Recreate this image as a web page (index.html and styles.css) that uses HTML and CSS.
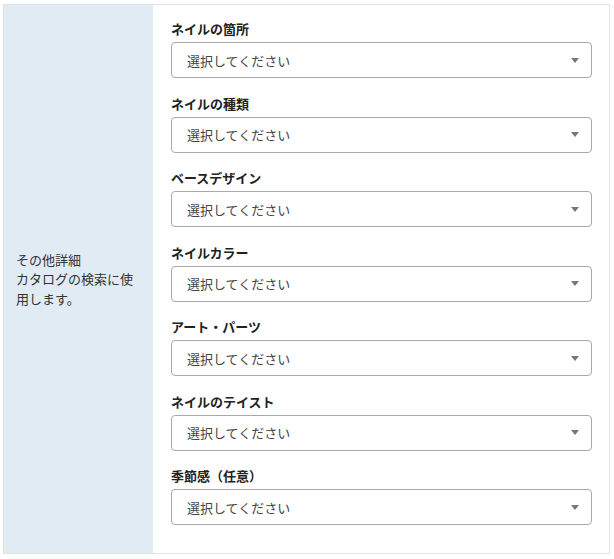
FILE: index.html
```html
<!DOCTYPE html>
<html lang="ja">
<head>
<meta charset="utf-8">
<link rel="stylesheet" href="styles.css">
</head>
<body>
<div class="row">
  <div class="head">
    <p>その他詳細<br>カタログの検索に使用します。</p>
  </div>
  <div class="fields">
    <div class="field">
      <div class="label">ネイルの箇所</div>
      <div class="select"><span>選択してください</span><i class="arrow"></i></div>
    </div>
    <div class="field">
      <div class="label">ネイルの種類</div>
      <div class="select"><span>選択してください</span><i class="arrow"></i></div>
    </div>
    <div class="field">
      <div class="label">ベースデザイン</div>
      <div class="select"><span>選択してください</span><i class="arrow"></i></div>
    </div>
    <div class="field">
      <div class="label">ネイルカラー</div>
      <div class="select"><span>選択してください</span><i class="arrow"></i></div>
    </div>
    <div class="field">
      <div class="label">アート・パーツ</div>
      <div class="select"><span>選択してください</span><i class="arrow"></i></div>
    </div>
    <div class="field">
      <div class="label">ネイルのテイスト</div>
      <div class="select"><span>選択してください</span><i class="arrow"></i></div>
    </div>
    <div class="field">
      <div class="label">季節感（任意）</div>
      <div class="select"><span>選択してください</span><i class="arrow"></i></div>
    </div>
  </div>
</div>
</body>
</html>
```

FILE: styles.css
```css
html, body {
  margin: 0;
  padding: 0;
  background: #fff;
}
body {
  padding: 4px 4px 0 3px;
  font-family: "Noto Sans CJK JP", "Noto Sans", sans-serif;
  color: #333;
}
.row {
  display: flex;
  width: 607px;
  height: 550px;
  box-sizing: border-box;
  border: 1px solid #e3e3e3;
}
.head {
  width: 149px;
  flex: none;
  background: #e1ebf4;
  display: flex;
  align-items: center;
  padding: 0 16px 0 12px;
  box-sizing: border-box;
}
.head p {
  margin: 0;
  font-size: 13px;
  line-height: 19.5px;
  color: #333;
}
.fields {
  flex: 1;
  display: flex;
  flex-direction: column;
  gap: 15.5px;
  padding: 14px 17px 0 18px;
}
.label {
  font-size: 13px;
  line-height: 19.5px;
  font-weight: 700;
  color: #222;
  margin-bottom: 3.5px;
}
.select {
  height: 36px;
  box-sizing: border-box;
  border: 1px solid #a9a9a9;
  border-radius: 4px;
  display: flex;
  align-items: center;
  justify-content: space-between;
  padding: 0 12px 0 15px;
  font-size: 13px;
  color: #444;
}
.arrow {
  width: 0;
  height: 0;
  border-left: 4px solid transparent;
  border-right: 4px solid transparent;
  border-top: 5px solid #777;
}
```
